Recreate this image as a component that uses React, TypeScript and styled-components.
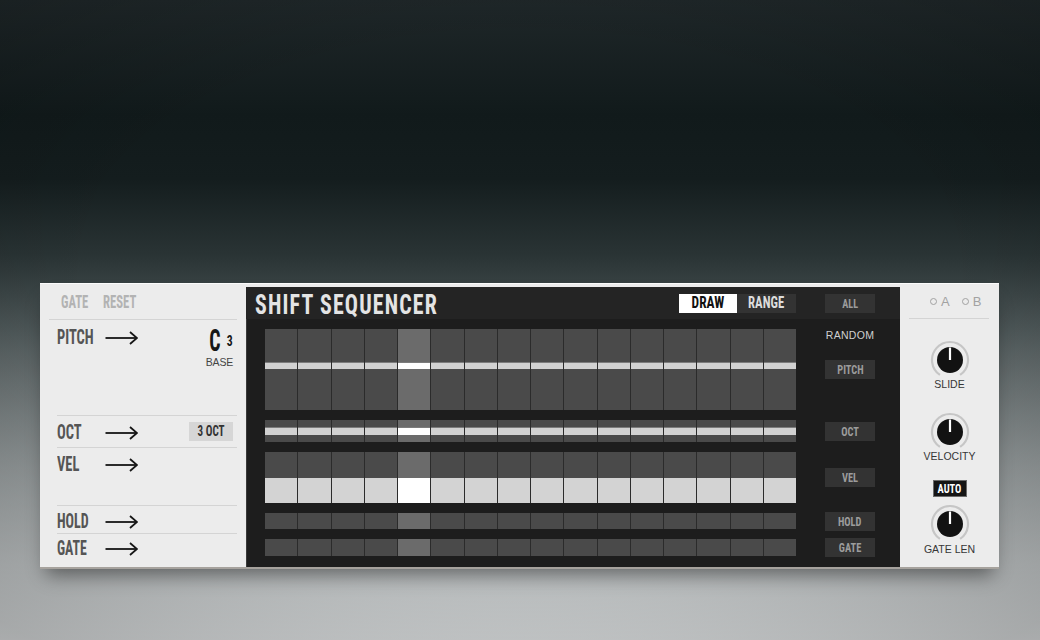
import React from "react";
import styled, { createGlobalStyle, css } from "styled-components";

// condensed display face (Bebas-like), approximated with a narrow sans squeezed horizontally
const COND = `"Liberation Sans Narrow", "Roboto Condensed", "DejaVu Sans Condensed", "Liberation Sans", sans-serif`;
const SANS = `"Liberation Sans", Arial, sans-serif`;

const steps = Array.from({ length: 16 }, (_, i) => i);
const ACTIVE = 4;

const GlobalStyle = createGlobalStyle`
  *, *::before, *::after { box-sizing: border-box; }
  html, body { margin: 0; padding: 0; }
  body { width: 1040px; height: 640px; overflow: hidden; font-family: ${SANS}; }
`;

const condensed = css<{ $size: number; $sx?: number; $color?: string; $origin?: string; $ls?: number; $lh?: number }>`
  display: inline-block;
  font-family: ${COND};
  font-weight: 700;
  font-size: ${(p) => p.$size}px;
  line-height: ${(p) => (p.$lh ? `${p.$lh}px` : 1)};
  letter-spacing: ${(p) => p.$ls ?? 0}px;
  color: ${(p) => p.$color ?? "inherit"};
  transform: scaleX(${(p) => p.$sx ?? 0.74});
  transform-origin: ${(p) => p.$origin ?? "left center"};
  white-space: nowrap;
`;

const Cond = styled.span<{ $size: number; $sx?: number; $color?: string; $origin?: string; $ls?: number; $lh?: number }>`
  ${condensed}
`;

const Page = styled.div`
  width: 1040px;
  height: 640px;
  padding: 283px 0 0 40px;
  background:
    radial-gradient(ellipse 75% 70% at 50% 45%, rgba(0, 0, 0, 0) 55%, rgba(0, 0, 0, 0.2) 100%),
    linear-gradient(
      180deg,
      #1f2729 0%,
      #111a1b 18%,
      #141d1e 28%,
      #2a3435 40%,
      #3c4647 46%,
      #5a6364 55%,
      #909697 72%,
      #bcc0c1 88%,
      #d4d7d8 100%
    );
`;

const Device = styled.div`
  width: 959px;
  height: 286px;
  display: grid;
  grid-template-columns: 206px 654px 99px;
  background: #ececec;
  border-top: 1px solid #fbfbfb;
  border-bottom: 2px solid #a6a29d;
  box-shadow: 0 12px 18px -6px rgba(0, 0, 0, 0.45);
`;

/* ---------- left panel ---------- */

const LeftPanel = styled.div`
  display: flex;
  flex-direction: column;
`;

const LeftHead = styled.div`
  height: 36px;
  margin: 0 9px;
  padding: 2px 0 0 12px;
  border-bottom: 1px solid #d4d4d4;
  display: grid;
  grid-template-columns: 42px auto;
  align-items: center;
`;

const LRow = styled.div<{ $h: number; $pt: number; $line?: boolean }>`
  height: ${(p) => p.$h}px;
  margin: 0 9px 0 17px;
  padding: ${(p) => p.$pt}px 4px 0 0;
  border-bottom: ${(p) => (p.$line ? "1px solid #d4d4d4" : "none")};
  display: grid;
  grid-template-columns: 48px 33px 1fr auto;
  align-items: start;
`;

const LLabel = styled.span<{ $size: number; $sx?: number; $color?: string }>`
  ${condensed}
`;

const ArrowSvg = styled.svg`
  margin-top: 3px;
  display: block;
`;

const Arrow = () => (
  <ArrowSvg width="33" height="14" viewBox="0 0 33 14">
    <path d="M0.5 7 H31.5" stroke="#161616" strokeWidth="1.8" />
    <path d="M25 1 L32 7 L25 13" stroke="#161616" strokeWidth="1.8" fill="none" />
  </ArrowSvg>
);

const BaseBlock = styled.div`
  grid-column: 4;
  display: flex;
  flex-direction: column;
  align-items: flex-end;
`;

const NoteLine = styled.div`
  display: flex;
  align-items: flex-start;
  height: 26px;
`;

const BaseText = styled.span`
  margin-top: 3px;
  font-family: ${SANS};
  font-size: 10.5px;
  line-height: 1;
  color: #444;
  letter-spacing: -0.2px;
`;

const OctBadge = styled.div`
  grid-column: 4;
  margin-top: -1px;
  width: 44px;
  height: 19px;
  background: #d6d6d6;
  display: flex;
  align-items: center;
  justify-content: center;
  color: #333;
`;

/* ---------- dark sequencer panel ---------- */

const SeqPanel = styled.div`
  margin: 3px 0 1px;
  background: #1d1d1d;
  display: flex;
  flex-direction: column;
  box-shadow: inset 1px 0 0 #3a3a3a;
`;

const SeqHead = styled.div`
  height: 32px;
  padding: 0 25px 0 9px;
  background: #242424;
  display: flex;
  align-items: center;
`;

const Title = styled.h1`
  flex: 1;
  margin: 0;
  font-weight: inherit;
`;

const ToggleGroup = styled.div`
  display: flex;
  margin-right: 29px;
`;

const ToggleBtn = styled.div<{ $active?: boolean; $w: number }>`
  width: ${(p) => p.$w}px;
  height: 19px;
  display: flex;
  align-items: center;
  justify-content: center;
  background: ${(p) => (p.$active ? "#ffffff" : "#333333")};
  color: ${(p) => (p.$active ? "#111" : "#dcdcdc")};
`;

const DarkBtn = styled.div`
  width: 50px;
  height: 19px;
  background: #333333;
  color: #9c9c9c;
  display: flex;
  align-items: center;
  justify-content: center;
  align-self: center;
`;

const SeqBody = styled.div`
  flex: 1;
  padding: 10px 25px 10px 19px;
  display: grid;
  grid-template-columns: 531px 50px;
  grid-template-rows: 81px 22px 51px 16px 17px;
  column-gap: 29px;
  row-gap: 10px;
`;

const Track = styled.div`
  display: grid;
  grid-template-columns: repeat(16, 1fr);
  column-gap: 1px;
  background: #2b2b2b;
`;

const Cell = styled.div<{ $hi: boolean }>`
  background: ${(p) => (p.$hi ? "#6b6b6b" : "#4a4a4a")};
  display: flex;
  flex-direction: column;
`;

const LineBar = styled.div<{ $top: number; $h: number; $hi: boolean }>`
  margin-top: ${(p) => p.$top}px;
  height: ${(p) => p.$h}px;
  background: ${(p) => (p.$hi ? "#ffffff" : "#d1d1d1")};
  box-shadow: 0 -1px 0 #7c7c7c;
`;

const VelFill = styled.div<{ $hi: boolean }>`
  margin-top: auto;
  height: 25px;
  background: ${(p) => (p.$hi ? "#ffffff" : "#d3d3d3")};
`;

const RandomCol = styled.div`
  display: flex;
  flex-direction: column;
  align-items: center;
`;

const RandomLabel = styled.span`
  font-family: ${SANS};
  font-size: 10.5px;
  line-height: 12px;
  letter-spacing: 0.3px;
  color: #d0d0d0;
  margin-bottom: 19px;
`;

/* ---------- right panel ---------- */

const RightPanel = styled.div`
  display: flex;
  flex-direction: column;
  align-items: center;
`;

const RightHead = styled.div`
  align-self: stretch;
  height: 35px;
  margin: 0 10px 0 9px;
  padding-left: 21px;
  border-bottom: 1px solid #d4d4d4;
  display: flex;
  align-items: center;
  gap: 12px;
`;

const Option = styled.div`
  display: flex;
  align-items: center;
  gap: 4px;
  font-family: ${SANS};
  font-size: 13px;
  color: #a2a2a2;
`;

const Radio = styled.span`
  width: 7px;
  height: 7px;
  border-radius: 50%;
  border: 1px solid #a2a2a2;
`;

const KnobSvg = styled.svg<{ $mt: number }>`
  display: block;
  margin-top: ${(p) => p.$mt}px;
`;

const KnobLabel = styled.span<{ $mt: number }>`
  margin-top: ${(p) => p.$mt}px;
  font-family: ${SANS};
  font-size: 10.5px;
  line-height: 12px;
  color: #363636;
`;

const AutoBadge = styled.div`
  margin-top: 18px;
  width: 34px;
  height: 17px;
  background: #151515;
  border: 1px solid #6a6a6a;
  display: flex;
  align-items: center;
  justify-content: center;
  color: #fff;
`;

const Knob = ({ mt }: { mt: number }) => (
  <KnobSvg $mt={mt} width="40" height="40" viewBox="0 0 40 40">
    <path d="M9.94 34.92 A18 18 0 1 1 30.06 34.92" fill="none" stroke="#c6c6c6" strokeWidth="2.2" />
    <circle cx="20" cy="20" r="13" fill="#121212" />
    <line x1="20" y1="7.5" x2="20" y2="20" stroke="#ffffff" strokeWidth="2.2" />
  </KnobSvg>
);

export default function App() {
  return (
    <>
      <GlobalStyle />
      <Page>
        <Device>
          <LeftPanel>
            <LeftHead>
              <Cond $size={17.6} $sx={0.72} $color="#b3b3b3">GATE</Cond>
              <Cond $size={17.6} $sx={0.72} $color="#b3b3b3">RESET</Cond>
            </LeftHead>

            <LRow $h={96} $pt={7.5} $line>
              <LLabel $size={19.5} $sx={0.74} $color="#555">PITCH</LLabel>
              <Arrow />
              <BaseBlock>
                <NoteLine>
                  <Cond $size={31} $lh={26} $sx={0.64} $color="#161616" $origin="right center" style={{ marginRight: 4.5 }}>
                    C
                  </Cond>
                  <Cond $size={15} $sx={0.78} $color="#161616" $origin="right center" style={{ marginTop: 6.2 }}>
                    3
                  </Cond>
                </NoteLine>
                <BaseText>BASE</BaseText>
              </BaseBlock>
            </LRow>

            <LRow $h={32} $pt={6.5} $line>
              <LLabel $size={19.5} $sx={0.74} $color="#555">OCT</LLabel>
              <Arrow />
              <OctBadge>
                <Cond $size={14} $sx={0.79} $origin="center">3 OCT</Cond>
              </OctBadge>
            </LRow>

            <LRow $h={58} $pt={7} $line>
              <LLabel $size={19.5} $sx={0.74} $color="#555">VEL</LLabel>
              <Arrow />
            </LRow>

            <LRow $h={28} $pt={5.5} $line>
              <LLabel $size={19.5} $sx={0.72} $color="#555">HOLD</LLabel>
              <Arrow />
            </LRow>

            <LRow $h={34} $pt={5}>
              <LLabel $size={19.5} $sx={0.71} $color="#555">GATE</LLabel>
              <Arrow />
            </LRow>
          </LeftPanel>

          <SeqPanel>
            <SeqHead>
              <Title>
                <Cond $size={28} $sx={0.78} $ls={1.5} $color="#e4e4e4">SHIFT SEQUENCER</Cond>
              </Title>
              <ToggleGroup>
                <ToggleBtn $active $w={58}>
                  <Cond $size={16.3} $sx={0.82} $origin="center">DRAW</Cond>
                </ToggleBtn>
                <ToggleBtn $w={59}>
                  <Cond $size={16.3} $sx={0.78} $origin="center">RANGE</Cond>
                </ToggleBtn>
              </ToggleGroup>
              <DarkBtn>
                <Cond $size={13} $sx={0.78} $origin="center">ALL</Cond>
              </DarkBtn>
            </SeqHead>

            <SeqBody>
              <Track>
                {steps.map((i) => (
                  <Cell key={i} $hi={i === ACTIVE}>
                    <LineBar $top={34} $h={6} $hi={i === ACTIVE} />
                  </Cell>
                ))}
              </Track>
              <RandomCol>
                <RandomLabel>RANDOM</RandomLabel>
                <DarkBtn>
                  <Cond $size={13} $sx={0.8} $origin="center">PITCH</Cond>
                </DarkBtn>
              </RandomCol>

              <Track>
                {steps.map((i) => (
                  <Cell key={i} $hi={i === ACTIVE}>
                    <LineBar $top={8} $h={7} $hi={i === ACTIVE} />
                  </Cell>
                ))}
              </Track>
              <DarkBtn>
                <Cond $size={13} $sx={0.8} $origin="center">OCT</Cond>
              </DarkBtn>

              <Track>
                {steps.map((i) => (
                  <Cell key={i} $hi={i === ACTIVE}>
                    <VelFill $hi={i === ACTIVE} />
                  </Cell>
                ))}
              </Track>
              <DarkBtn>
                <Cond $size={13} $sx={0.8} $origin="center">VEL</Cond>
              </DarkBtn>

              <Track>
                {steps.map((i) => (
                  <Cell key={i} $hi={i === ACTIVE} />
                ))}
              </Track>
              <DarkBtn>
                <Cond $size={13} $sx={0.8} $origin="center">HOLD</Cond>
              </DarkBtn>

              <Track>
                {steps.map((i) => (
                  <Cell key={i} $hi={i === ACTIVE} />
                ))}
              </Track>
              <DarkBtn>
                <Cond $size={13} $sx={0.8} $origin="center">GATE</Cond>
              </DarkBtn>
            </SeqBody>
          </SeqPanel>

          <RightPanel>
            <RightHead>
              <Option>
                <Radio />A
              </Option>
              <Option>
                <Radio />B
              </Option>
            </RightHead>
            <Knob mt={21} />
            <KnobLabel $mt={-2}>SLIDE</KnobLabel>
            <Knob mt={22} />
            <KnobLabel $mt={-2}>VELOCITY</KnobLabel>
            <AutoBadge>
              <Cond $size={13.5} $sx={0.77} $origin="center">AUTO</Cond>
            </AutoBadge>
            <Knob mt={6.5} />
            <KnobLabel $mt={-0.5}>GATE LEN</KnobLabel>
          </RightPanel>
        </Device>
      </Page>
    </>
  );
}
